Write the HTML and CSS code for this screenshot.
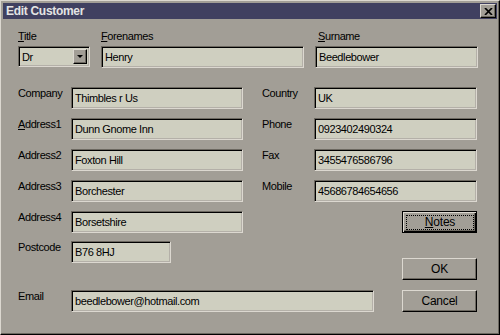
FILE: index.html
```html
<!DOCTYPE html>
<html lang="en">
<head>
    <meta charset="UTF-8">
    <title>Edit Customer</title>
    <link rel="stylesheet" href="styles.css">
</head>
<body>
    <div class="window">
        <div class="titlebar">
            <span class="title">Edit Customer</span>
            <span class="close">
                <svg width="9" height="7" viewBox="0 0 9 7"><path d="M1 0L8 7M8 0L1 7" stroke="#000" stroke-width="1.7"/></svg>
            </span>
        </div>

        <div class="content">
            <div class="top">
                <div class="field f-title">
                    <label><u>T</u>itle</label>
                    <div class="combo">
                        <span class="combo-text">Dr</span>
                        <span class="drop"><i class="arrow"></i></span>
                    </div>
                </div>
                <div class="field f-fore">
                    <label><u>F</u>orenames</label>
                    <input type="text" value="Henry">
                </div>
                <div class="field f-sur">
                    <label><u>S</u>urname</label>
                    <input type="text" value="Beedlebower">
                </div>
            </div>

            <div class="main">
                <div class="col-left">
                    <div class="row"><label>Company</label><input type="text" value="Thimbles r Us"></div>
                    <div class="row"><label><u>A</u>ddress1</label><input type="text" value="Dunn Gnome Inn"></div>
                    <div class="row"><label>Address2</label><input type="text" value="Foxton Hill"></div>
                    <div class="row"><label>Address3</label><input type="text" value="Borchester"></div>
                    <div class="row"><label>Address4</label><input type="text" value="Borsetshire"></div>
                    <div class="row postcode"><label>Postcode</label><input type="text" value="B76 8HJ"></div>
                    <div class="row email"><label>Email</label><input type="text" value="beedlebower@hotmail.com"></div>
                </div>
                <div class="col-right">
                    <div class="row"><label>Country</label><input type="text" value="UK"></div>
                    <div class="row"><label>Phone</label><input type="text" value="0923402490324"></div>
                    <div class="row"><label>Fax</label><input type="text" value="3455476586796"></div>
                    <div class="row"><label>Mobile</label><input type="text" value="45686784654656"></div>
                    <button class="btn default"><span class="focus"><u>N</u>otes</span></button>
                    <button class="btn ok">OK</button>
                    <button class="btn cancel">Cancel</button>
                </div>
            </div>
        </div>
    </div>
</body>
</html>
```

FILE: styles.css
```css
body {
    margin: 0;
    font-family: "Liberation Sans", Arial, sans-serif;
    font-size: 11px;
    letter-spacing: -0.4px;
    color: #000;
}
.window {
    width: 500px;
    height: 335px;
    box-sizing: border-box;
    padding: 2px;
    background-color: #a29e96;
    border: 1px solid;
    border-color: #dcd8d0 #000 #000 #dcd8d0;
    box-shadow: inset -1px -1px #6c6860;
}
.titlebar {
    height: 16px;
    background-color: #404060;
    display: flex;
    align-items: center;
    justify-content: space-between;
    padding: 0 1px 0 3px;
}
.title {
    color: #e4e4e4;
    font-weight: bold;
    font-size: 12px;
    letter-spacing: -0.3px;
}
.close {
    width: 16px;
    height: 14px;
    box-sizing: border-box;
    background-color: #a29e96;
    border: 1px solid;
    border-color: #dcd8d0 #000 #000 #dcd8d0;
    box-shadow: inset -1px -1px #6c6860;
    display: flex;
    align-items: center;
    justify-content: center;
}
.content {
    padding: 11px 0 0 15px;
}
label {
    line-height: 13px;
}
u {
    text-decoration: underline;
    text-underline-offset: 1px;
}
input {
    box-sizing: border-box;
    height: 22px;
    margin: 0;
    padding: 0 3px;
    font-family: inherit;
    font-size: 11px;
    letter-spacing: -0.4px;
    color: #000;
    background-color: #cfcfc0;
    border: 1px solid;
    border-color: #6c6860 #dcd8d0 #dcd8d0 #6c6860;
    box-shadow: inset 1px 1px #000, inset -1px -1px #b4b0a8;
    outline: none;
}

/* top row */
.top {
    display: flex;
    gap: 11px;
}
.field label {
    display: block;
    margin-bottom: 3px;
}
.f-title { width: 72px; }
.f-fore { width: 203px; }
.f-sur { width: 163px; }
.f-sur label { padding-left: 3px; }
.field input { width: 100%; }

.combo {
    box-sizing: border-box;
    height: 21px;
    display: flex;
    align-items: center;
    padding: 2px;
    background-color: #cfcfc0;
    border: 1px solid;
    border-color: #6c6860 #dcd8d0 #dcd8d0 #6c6860;
    box-shadow: inset 1px 1px #000, inset -1px -1px #b4b0a8;
}
.combo-text {
    flex: 1;
    padding-left: 1px;
}
.drop {
    width: 14px;
    height: 15px;
    box-sizing: border-box;
    background-color: #a29e96;
    border: 1px solid;
    border-color: #dcd8d0 #000 #000 #dcd8d0;
    box-shadow: inset -1px -1px #6c6860;
    display: flex;
    align-items: center;
    justify-content: center;
}
.arrow {
    width: 0;
    height: 0;
    border-left: 3px solid transparent;
    border-right: 3px solid transparent;
    border-top: 3px solid #000;
}

/* main grid */
.main {
    display: flex;
    margin-top: 19px;
}
.col-left {
    width: 244px;
    display: flex;
    flex-direction: column;
}
.col-right {
    width: 215px;
    display: flex;
    flex-direction: column;
}
.row {
    display: flex;
    margin-bottom: 9px;
}
.col-left .row label { width: 53px; flex-shrink: 0; }
.col-left .row input { width: 172px; flex-shrink: 0; }
.col-right .row label { width: 52px; flex-shrink: 0; }
.col-right .row input { width: 163px; flex-shrink: 0; }
.row.postcode { margin-top: -1px; }
.col-left .row.postcode input { width: 100px; }
.row.email { margin-top: 18px; }
.col-left .row.email input { width: 303px; }

.btn {
    align-self: flex-end;
    width: 75px;
    height: 22px;
    padding: 0;
    font-family: inherit;
    font-size: 12px;
    letter-spacing: -0.2px;
    color: #000;
    background-color: #a29e96;
    border: 1px solid;
    border-color: #dcd8d0 #000 #000 #dcd8d0;
    box-shadow: inset -1px -1px #6c6860;
}
.btn.default {
    border-color: #000;
    box-shadow: inset 1px 1px #dcd8d0, inset -1px -1px #000, inset -2px -2px #6c6860;
}
.focus {
    display: block;
    margin: 0 2px 0 3px;
    line-height: 13px;
    border: 1px dotted #000;
}
.btn.ok { margin-top: 25px; }
.btn.cancel { margin-top: 10px; }
```
